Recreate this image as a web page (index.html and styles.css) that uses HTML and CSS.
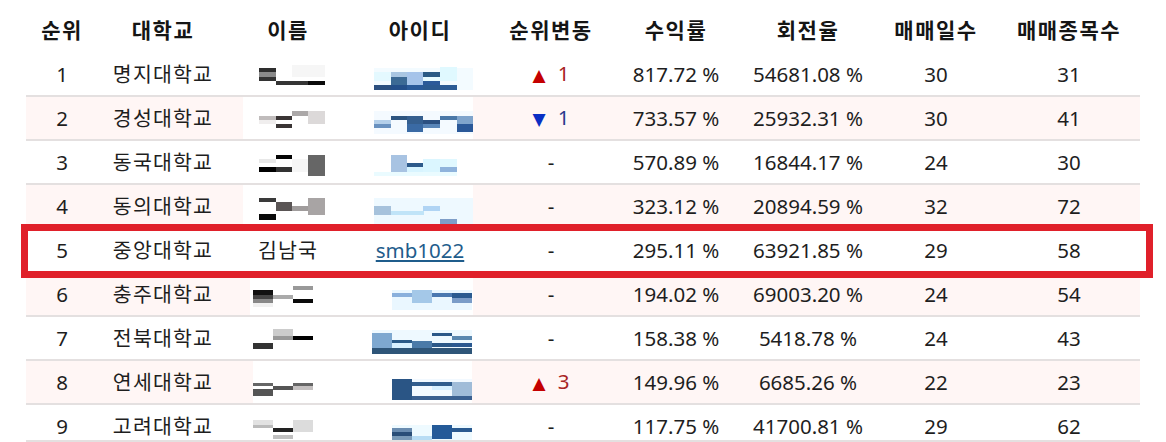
FILE: index.html
```html
<!DOCTYPE html>
<html lang="ko">
<head>
<meta charset="utf-8">
<title>대학 순위</title>
<link rel="stylesheet" href="styles.css">
</head>
<body>
<div class="board">
  <table class="rank">
    <colgroup>
      <col class="c-rank"><col class="c-univ"><col class="c-name"><col class="c-id"><col class="c-move">
      <col class="c-profit"><col class="c-turn"><col class="c-days"><col class="c-items">
    </colgroup>
    <thead>
      <tr><th>순위</th><th>대학교</th><th>이름</th><th>아이디</th><th>순위변동</th><th>수익률</th><th>회전율</th><th>매매일수</th><th>매매종목수</th></tr>
    </thead>
    <tbody>
      <tr>
        <td>1</td><td class="ko">명지대학교</td>
        <td class="mosaic"><svg viewBox="0 0 120 42" width="120" height="42"><rect x="31" y="15" width="17" height="4" fill="#2e2e2e"/><rect x="31" y="19" width="17" height="5" fill="#8a8a8a"/><rect x="31" y="24" width="17" height="4" fill="#333"/><rect x="64" y="12" width="33" height="12" fill="#f6f6f6"/><rect x="48" y="28" width="32" height="4" fill="#353535"/><rect x="80" y="28" width="17" height="4" fill="#0a0a0a"/></svg></td>
        <td class="mosaic"><svg viewBox="0 0 144 42" width="144" height="42"><rect x="26" y="15" width="99" height="22" fill="#f3fbff"/><rect x="26" y="19" width="17" height="9" fill="#e4f9ff"/><rect x="26" y="32" width="17" height="5" fill="#2b4f7f"/><rect x="43" y="19" width="16" height="5" fill="#a9c6e2"/><rect x="43" y="24" width="16" height="8" fill="#3c6a95"/><rect x="43" y="32" width="16" height="5" fill="#244f8a"/><rect x="59" y="19" width="16" height="13" fill="#a6c4ea"/><rect x="59" y="32" width="16" height="5" fill="#2a5a99"/><rect x="75" y="19" width="17" height="5" fill="#2b5a85"/><rect x="75" y="24" width="17" height="4" fill="#e8fbff"/><rect x="75" y="28" width="17" height="4" fill="#2b5a99"/><rect x="75" y="32" width="17" height="5" fill="#2b5a90"/><rect x="92" y="14" width="17" height="14" fill="#e0f9ff"/><rect x="92" y="32" width="17" height="5" fill="#2c5b94"/></svg></td>
        <td><span class="up">▲</span><span class="up-n">1</span></td><td>817.72 %</td><td>54681.08 %</td><td>30</td><td>31</td>
      </tr>
      <tr class="alt">
        <td>2</td><td class="ko">경성대학교</td>
        <td class="mosaic"><svg viewBox="0 0 120 42" width="120" height="42"><rect x="15" y="0" width="105" height="42" fill="#fff"/><rect x="31" y="19" width="17" height="4" fill="#c0bcbc"/><rect x="31" y="23" width="17" height="4" fill="#f0eeee"/><rect x="48" y="19" width="16" height="4" fill="#3a3535"/><rect x="48" y="27" width="16" height="4" fill="#3a3535"/><rect x="64" y="14" width="16" height="5" fill="#aba8a8"/><rect x="80" y="14" width="17" height="13" fill="#dcd9d9"/></svg></td>
        <td class="mosaic"><svg viewBox="0 0 144 42" width="144" height="42"><rect x="0" y="0" width="125" height="42" fill="#fff"/><rect x="26" y="14" width="99" height="23" fill="#f4faff"/><rect x="26" y="23" width="17" height="4" fill="#b5d0ea"/><rect x="26" y="27" width="17" height="4" fill="#6a92c0"/><rect x="43" y="19" width="16" height="4" fill="#2d5580"/><rect x="59" y="19" width="16" height="8" fill="#355f8f"/><rect x="59" y="27" width="16" height="8" fill="#3a6aa4"/><rect x="75" y="23" width="17" height="4" fill="#2c5080"/><rect x="75" y="27" width="17" height="4" fill="#5a86b8"/><rect x="92" y="19" width="17" height="4" fill="#4a78a8"/><rect x="109" y="19" width="16" height="8" fill="#7fa4cc"/><rect x="109" y="27" width="16" height="8" fill="#2a5898"/></svg></td>
        <td><span class="down">▼</span><span class="down-n">1</span></td><td>733.57 %</td><td>25932.31 %</td><td>30</td><td>41</td>
      </tr>
      <tr>
        <td>3</td><td class="ko">동국대학교</td>
        <td class="mosaic"><svg viewBox="0 0 120 42" width="120" height="42"><rect x="31" y="18" width="17" height="4" fill="#e8e8e8"/><rect x="31" y="26" width="17" height="5" fill="#000"/><rect x="48" y="14" width="16" height="4" fill="#050505"/><rect x="48" y="26" width="16" height="5" fill="#333"/><rect x="64" y="18" width="16" height="13" fill="#f6f6f6"/><rect x="80" y="14" width="17" height="21" fill="#666"/></svg></td>
        <td class="mosaic"><svg viewBox="0 0 144 42" width="144" height="42"><rect x="26" y="31" width="83" height="4" fill="#eafbff"/><rect x="43" y="14" width="16" height="17" fill="#a8c3e2"/><rect x="59" y="22" width="16" height="4" fill="#2e5a8a"/><rect x="59" y="26" width="16" height="5" fill="#d8f4ff"/><rect x="75" y="18" width="17" height="13" fill="#dbf6ff"/><rect x="92" y="18" width="17" height="8" fill="#e0f8ff"/><rect x="92" y="26" width="17" height="5" fill="#8fb3dc"/></svg></td>
        <td>-</td><td>570.89 %</td><td>16844.17 %</td><td>24</td><td>30</td>
      </tr>
      <tr class="alt">
        <td>4</td><td class="ko">동의대학교</td>
        <td class="mosaic"><svg viewBox="0 0 120 42" width="120" height="42"><rect x="15" y="0" width="105" height="42" fill="#fff"/><rect x="31" y="13" width="17" height="4" fill="#3a3a3a"/><rect x="31" y="29" width="17" height="6" fill="#0a0a0a"/><rect x="48" y="17" width="16" height="9" fill="#5a5555"/><rect x="64" y="21" width="16" height="5" fill="#a09c9c"/><rect x="80" y="13" width="17" height="17" fill="#a8a4a4"/></svg></td>
        <td class="mosaic"><svg viewBox="0 0 144 42" width="144" height="42"><rect x="0" y="0" width="125" height="42" fill="#fff"/><rect x="26" y="13" width="99" height="26" fill="#eef9ff"/><rect x="26" y="21" width="17" height="9" fill="#a6c2dc"/><rect x="43" y="26" width="33" height="4" fill="#c0e4f8"/><rect x="75" y="21" width="17" height="5" fill="#b0d4f4"/><rect x="92" y="34" width="17" height="5" fill="#7e9ec8"/></svg></td>
        <td>-</td><td>323.12 %</td><td>20894.59 %</td><td>32</td><td>72</td>
      </tr>
      <tr class="hl">
        <td>5</td><td class="ko">중앙대학교</td><td class="ko">김남국</td><td><a href="#" class="uid">smb1022</a></td>
        <td>-</td><td>295.11 %</td><td>63921.85 %</td><td>29</td><td>58</td>
      </tr>
      <tr class="alt">
        <td>6</td><td class="ko">충주대학교</td>
        <td class="mosaic"><svg viewBox="0 0 120 42" width="120" height="42"><rect x="22" y="0" width="98" height="42" fill="#fff"/><rect x="25" y="17" width="20" height="5" fill="#111"/><rect x="25" y="22" width="20" height="4" fill="#444"/><rect x="25" y="26" width="20" height="4" fill="#888"/><rect x="25" y="30" width="20" height="4" fill="#f0f0f0"/><rect x="45" y="22" width="20" height="4" fill="#aaa"/><rect x="65" y="13" width="20" height="4" fill="#999"/><rect x="65" y="26" width="20" height="4" fill="#0a0a0a"/></svg></td>
        <td class="mosaic"><svg viewBox="0 0 144 42" width="144" height="42"><rect x="0" y="0" width="125" height="42" fill="#fff"/><rect x="44" y="17" width="80" height="20" fill="#eaf7ff"/><rect x="44" y="20" width="20" height="4" fill="#8ab0dc"/><rect x="64" y="17" width="20" height="13" fill="#a4c8e8"/><rect x="84" y="20" width="20" height="4" fill="#4a78b0"/><rect x="104" y="20" width="20" height="5" fill="#2a5a90"/><rect x="104" y="25" width="20" height="5" fill="#7a9cc8"/></svg></td>
        <td>-</td><td>194.02 %</td><td>69003.20 %</td><td>24</td><td>54</td>
      </tr>
      <tr>
        <td>7</td><td class="ko">전북대학교</td>
        <td class="mosaic"><svg viewBox="0 0 120 42" width="120" height="42"><rect x="25" y="26" width="20" height="6" fill="#333"/><rect x="45" y="12" width="20" height="7" fill="#ccc"/><rect x="45" y="19" width="20" height="4" fill="#999"/><rect x="65" y="19" width="20" height="4" fill="#000"/></svg></td>
        <td class="mosaic"><svg viewBox="0 0 144 42" width="144" height="42"><rect x="24" y="13" width="100" height="24" fill="#eef9ff"/><rect x="24" y="16" width="20" height="15" fill="#7ea8d0"/><rect x="24" y="31" width="100" height="6" fill="#2e5578"/><rect x="44" y="23" width="20" height="3" fill="#2a5a88"/><rect x="44" y="26" width="20" height="5" fill="#d8f0ff"/><rect x="64" y="24" width="20" height="7" fill="#4a7aa8"/><rect x="84" y="16" width="20" height="3" fill="#2a5888"/><rect x="84" y="26" width="20" height="4" fill="#2a5888"/><rect x="104" y="19" width="20" height="4" fill="#5a88b0"/><rect x="104" y="26" width="20" height="4" fill="#2a5890"/></svg></td>
        <td>-</td><td>158.38 %</td><td>5418.78 %</td><td>24</td><td>43</td>
      </tr>
      <tr class="alt">
        <td>8</td><td class="ko">연세대학교</td>
        <td class="mosaic"><svg viewBox="0 0 120 42" width="120" height="42"><rect x="25" y="0" width="95" height="42" fill="#fff"/><rect x="25" y="22" width="20" height="3" fill="#666"/><rect x="25" y="28" width="20" height="7" fill="#555"/><rect x="45" y="25" width="20" height="4" fill="#555"/><rect x="65" y="22" width="20" height="3" fill="#666"/><rect x="65" y="25" width="20" height="4" fill="#c4c0c0"/></svg></td>
        <td class="mosaic"><svg viewBox="0 0 144 42" width="144" height="42"><rect x="0" y="0" width="124" height="42" fill="#fff"/><rect x="44" y="18" width="80" height="21" fill="#f2f9ff"/><rect x="44" y="18" width="20" height="21" fill="#2a5585"/><rect x="64" y="21" width="40" height="4" fill="#315d8d"/><rect x="64" y="35" width="60" height="4" fill="#3a6090"/><rect x="84" y="25" width="20" height="4" fill="#d8f0ff"/><rect x="104" y="21" width="20" height="14" fill="#a0bcd8"/></svg></td>
        <td><span class="up">▲</span><span class="up-n">3</span></td><td>149.96 %</td><td>6685.26 %</td><td>22</td><td>23</td>
      </tr>
      <tr class="last">
        <td>9</td><td class="ko">고려대학교</td>
        <td class="mosaic"><svg viewBox="0 0 120 35" width="120" height="35"><rect x="25" y="15" width="20" height="5" fill="#e2e2e2"/><rect x="25" y="20" width="20" height="3" fill="#bbb"/><rect x="45" y="23" width="20" height="4" fill="#222"/><rect x="45" y="30" width="20" height="4" fill="#c0c0c0"/><rect x="65" y="15" width="20" height="12" fill="#dcdcdc"/></svg></td>
        <td class="mosaic"><svg viewBox="0 0 144 35" width="144" height="35"><rect x="44" y="20" width="80" height="15" fill="#eefaff"/><rect x="44" y="23" width="20" height="4" fill="#6a8cb0"/><rect x="44" y="27" width="20" height="4" fill="#2a4e78"/><rect x="44" y="31" width="20" height="4" fill="#7a9ab8"/><rect x="64" y="31" width="20" height="4" fill="#b8dcf4"/><rect x="84" y="20" width="20" height="14" fill="#245a98"/><rect x="104" y="23" width="20" height="4" fill="#2a5a90"/></svg></td>
        <td>-</td><td>117.75 %</td><td>41700.81 %</td><td>29</td><td>62</td>
      </tr>
    </tbody>
  </table>
  <div class="mark"></div>
</div>
</body>
</html>
```

FILE: styles.css
```css
html, body {
  margin: 0;
  padding: 0;
  background: #fff;
}
body {
  font-family: "Noto Sans", "Noto Sans CJK KR", sans-serif;
  color: #1e1e1e;
  font-size: 20.5px;
}
.board {
  position: relative;
  padding-left: 26px;
}
.rank {
  border-collapse: collapse;
  table-layout: fixed;
  width: 1114px;
}
.c-rank { width: 72px; }
.c-univ { width: 130px; }
.c-name { width: 120px; }
.c-id { width: 144px; }
.c-move { width: 118px; }
.c-profit { width: 132px; }
.c-turn { width: 132px; }
.c-days { width: 124px; }
.c-items { width: 142px; }

.rank th {
  height: 53px;
  padding: 5px 0 0;
  font-size: 21px;
  letter-spacing: 1.5px;
  font-weight: 700;
  color: #151515;
  text-align: center;
  vertical-align: middle;
  box-sizing: border-box;
}
.rank td {
  height: 42px;
  padding: 0;
  text-align: center;
  vertical-align: middle;
  border-bottom: 2px solid #e4e0e0;
  white-space: nowrap;
  line-height: 24px;
}
.rank td.ko {
  letter-spacing: 1.2px;
}
.rank tr.alt td {
  background: #fff6f5;
}
.rank tr.last td {
  height: 35px;
  vertical-align: top;
  padding-top: 9px;
  box-sizing: border-box;
}
.rank tr.last td.mosaic {
  padding-top: 0;
}
.mosaic svg {
  display: block;
}
.up, .down {
  font-family: "DejaVu Sans", sans-serif;
  font-size: 17px;
  margin-right: 12px;
}
.up { color: #c40000; }
.up-n { color: #a82424; }
.down { color: #0a2fc4; }
.down-n { color: #2a3a8c; }
.uid {
  color: #1f5d8c;
  text-decoration: underline;
}
.mark {
  position: absolute;
  left: 21px;
  top: 224px;
  width: 1132px;
  height: 54px;
  box-sizing: border-box;
  border: 7px solid #e0202a;
  pointer-events: none;
}
```
